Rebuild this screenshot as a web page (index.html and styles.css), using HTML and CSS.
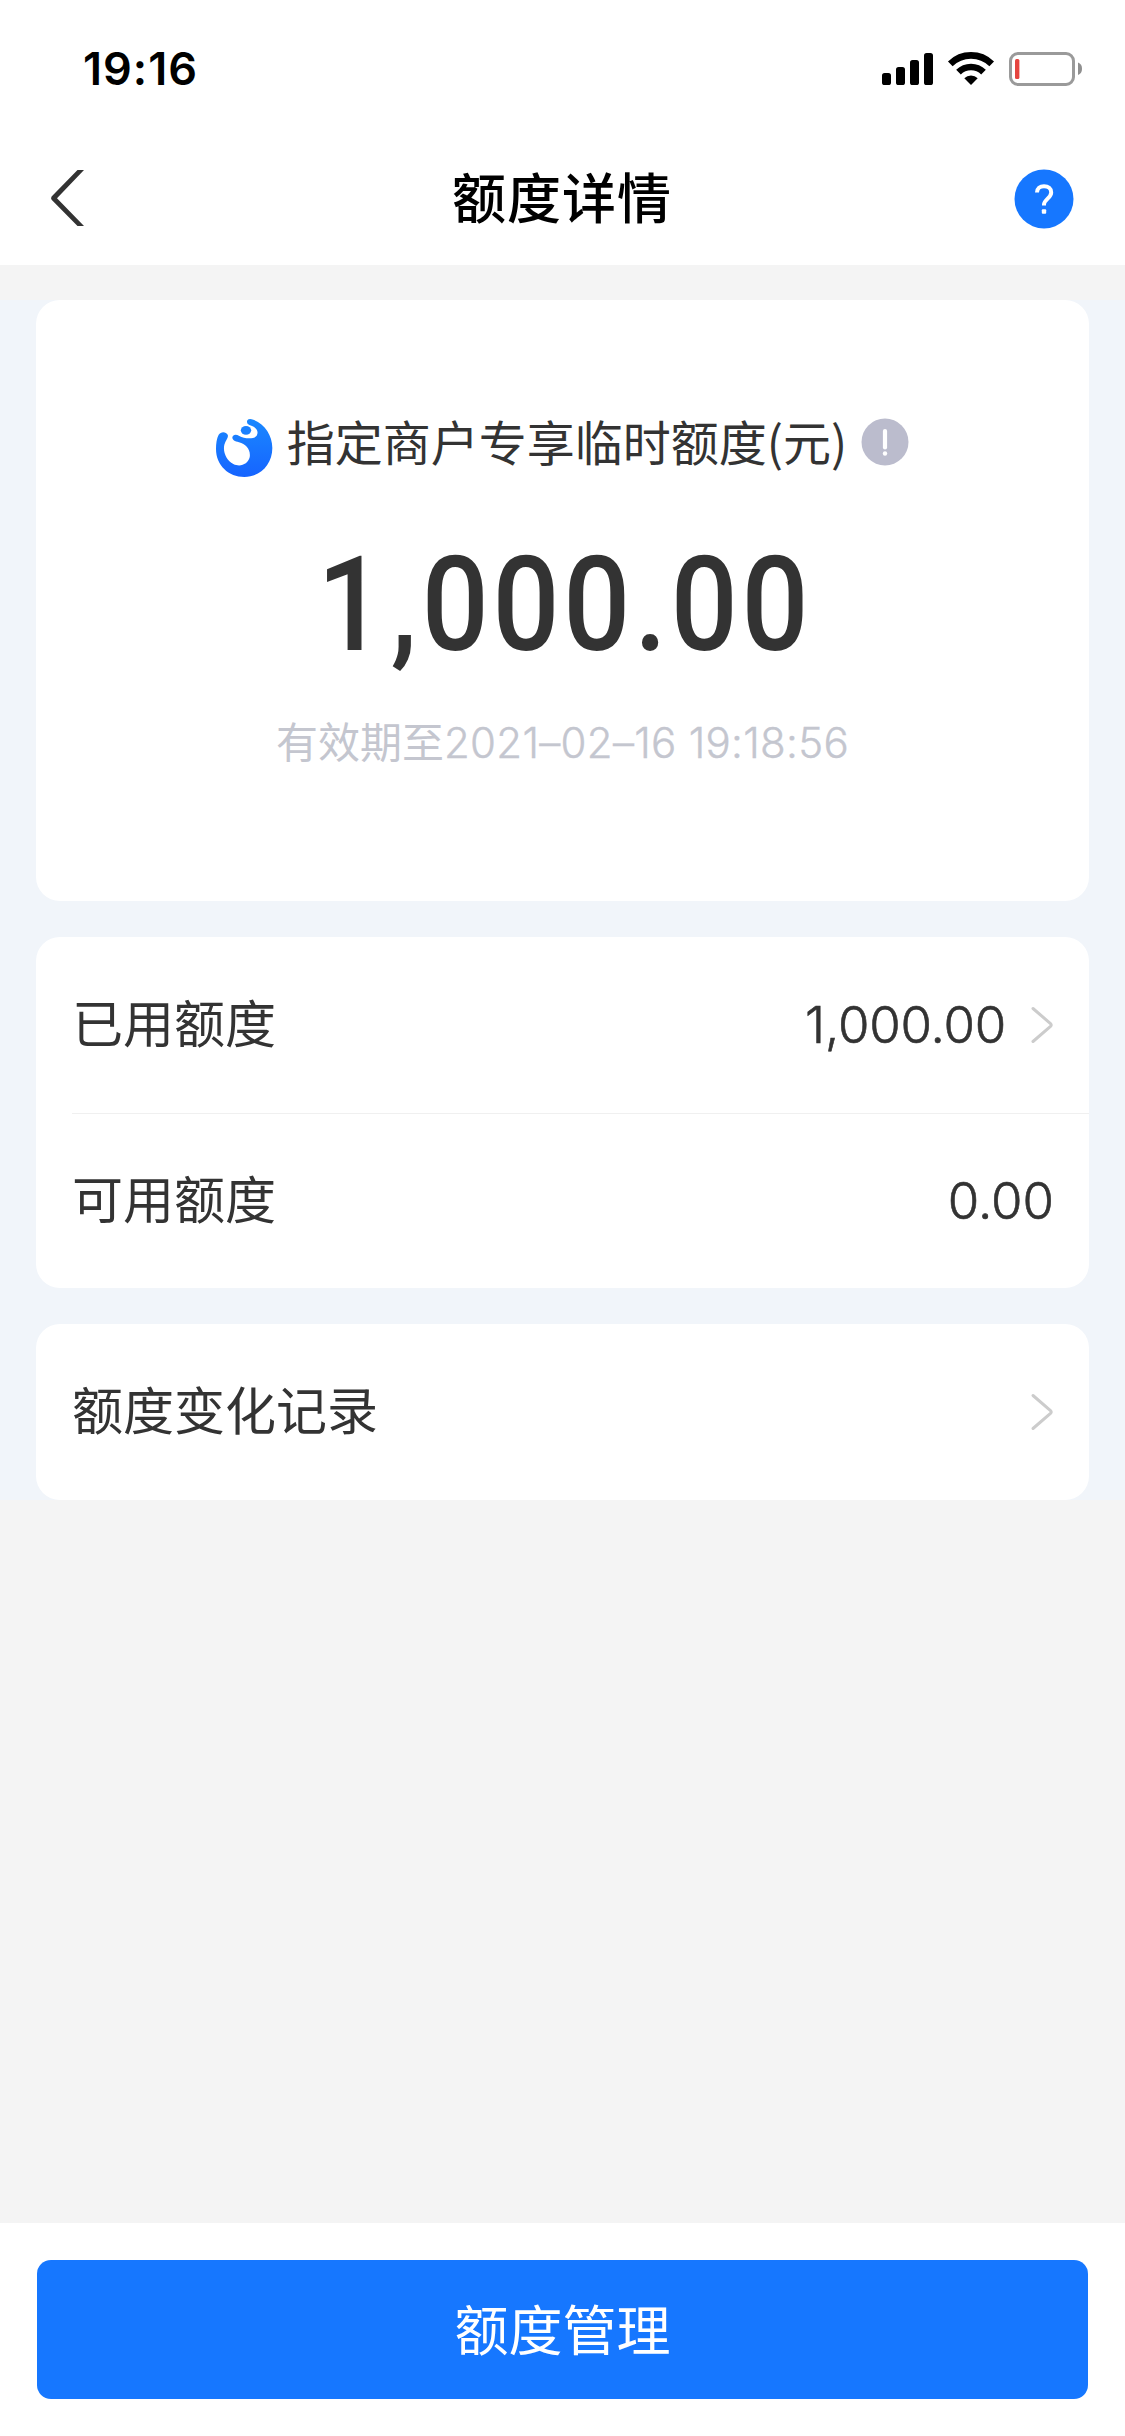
FILE: index.html
```html
<!DOCTYPE html>
<html lang="zh-CN">
<head>
<meta charset="utf-8">
<title>额度详情</title>
<link rel="stylesheet" href="styles.css">
</head>
<body>
<div class="screen">
  <div class="status">
    <span class="time">19:16</span>
    <svg class="indicators" width="204" height="40" viewBox="880 49 204 40">
      <rect x="882" y="73" width="9" height="12" rx="2.6"/>
      <rect x="896" y="67" width="9" height="18" rx="2.6"/>
      <rect x="910" y="60" width="9" height="25" rx="2.6"/>
      <rect x="924" y="53" width="9" height="32" rx="2.6"/>
      <g fill="none" stroke="#000" stroke-width="6.6">
        <path d="M950.3 63.9a29.5 29.5 0 0 1 41.4 0"/>
        <path d="M958.5 72.2a17.8 17.8 0 0 1 25 0"/>
      </g>
      <path d="M964.3 78.2a9.5 9.5 0 0 1 13.4 0L971 85z"/>
      <rect x="1010.5" y="53.500" width="63" height="31" rx="7.500" fill="none" stroke="#9a9a9a" stroke-width="3"/>
      <rect x="1015" y="59" width="4.400" height="20" rx="1.500" fill="#e5443f"/>
      <path d="M1078 62.500q4 1.500 4 6.200t-4 6.300z" fill="#8f8f8f"/>
    </svg>
  </div>
  <header class="nav">
    <svg class="back" width="36" height="60" viewBox="50 168 36 60"><path d="M77.500 170H84L57 198.200 84 226H77.500L51.600 199.800Q50.500 198.200 51.600 196.500z" fill="#333"/></svg>
    <h1 class="title">额度详情</h1>
    <svg class="help" width="60" height="60" viewBox="0 0 60 60">
      <circle cx="30" cy="30" r="29.500" fill="#1677ff"/>
      <path d="M23 23.500C23 19.400 26 17.200 30 17.200c4.200 0 7.200 2.400 7.200 6.200 0 5.600-7.200 7.200-7.200 12.100v1" fill="none" stroke="#fff" stroke-width="4"/>
      <rect x="27.800" y="40.300" width="4.400" height="4.400" rx="1" fill="#fff"/>
    </svg>
  </header>
  <main class="content">
    <section class="card summary">
      <div class="caption">
        <svg class="logo" width="58" height="60" viewBox="75 84 174 180">
          <defs><linearGradient id="blue" x1="0" y1="0" x2="0" y2="1"><stop offset="0" stop-color="#1a88ff"/><stop offset="1" stop-color="#1664ff"/></linearGradient></defs>
          <path fill="url(#blue)" d="M172 91Q177 84 190 89C224 102 247 136 247 174C247 224 210 261 163 261C116 261 78 226 78 177C78 160 80 145 86 134C92 124 108 124 113 134C117 143 107 151 103 164C98 187 110 211 130 222C151 233 174 222 179 202C183 180 168 162 147 157C134 154 127 150 127 142C129 133 138 132 148 138C162 146 191 149 200 137C208 123 197 110 178 105Q168 101 172 91Z"/>
          <ellipse cx="168" cy="121" rx="15.500" ry="13" fill="#1a80ff"/>
        </svg>
        <span class="caption-text">指定商户专享临时额度(元)</span>
        <svg class="info" width="48" height="48" viewBox="0 0 48 48">
          <circle cx="24" cy="24" r="23.500" fill="#bbbccd"/>
          <path d="M24 13v16.500" stroke="#fff" stroke-width="4.200" stroke-linecap="round"/>
          <circle cx="24" cy="35.500" r="2.200" fill="#fff"/>
        </svg>
      </div>
      <div class="amount"><span class="lead">1</span><span class="comma">,</span>000.00</div>
      <div class="expiry">有效期至<span class="stamp">2021–02–16 19:18:56</span></div>
    </section>
    <section class="card">
      <div class="row used">
        <span class="label">已用额度</span>
        <span class="value">1,000.00</span>
        <svg class="chevron" width="24" height="40" viewBox="0 0 24 40"><path d="M3 3.500 20.500 18.600q1.500 1.400 0 2.800L3 36.500"/></svg>
      </div>
      <div class="row divided">
        <span class="label">可用额度</span>
        <span class="value">0.00</span>
      </div>
    </section>
    <section class="card">
      <div class="row">
        <span class="label">额度变化记录</span>
        <svg class="chevron alone" width="24" height="40" viewBox="0 0 24 40"><path d="M3 3.500 20.500 18.600q1.500 1.400 0 2.800L3 36.500"/></svg>
      </div>
    </section>
  </main>
  <footer class="footer"><button class="primary">额度管理</button></footer>
</div>
</body>
</html>
```
FILE: styles.css
```css
* { box-sizing: border-box; }
body { margin: 0; }
.screen {
  display: flex;
  flex-direction: column;
  width: 1125px;
  height: 2436px;
  background: #f4f4f4;
  color: #333;
  font-family: Inter, "Noto Sans CJK SC", sans-serif;
}
.status {
  display: flex;
  justify-content: space-between;
  align-items: center;
  height: 132px;
  padding: 6px 41px 0 83px;
  background: #fff;
  color: #000;
}
.time { font-size: 45px; font-weight: 600; line-height: 60px; letter-spacing: 1px; }
.nav {
  display: flex;
  justify-content: space-between;
  align-items: center;
  height: 133px;
  padding: 0 51px 0 50px;
  background: #fff;
}
.back { margin: 0 24px 2px 0; }
.title {
  margin: 0;
  padding-bottom: 6px;
  color: #000;
  font: 500 54px/80px "Noto Sans CJK SC", sans-serif;
  letter-spacing: 1px;
}
.content {
  display: flex;
  flex-direction: column;
  gap: 36px;
  height: 1200px;
  margin-top: 35px;
  padding: 0 36px;
  background: #f1f5fa;
}
.card { border-radius: 24px; background: #fff; }
.summary {
  display: flex;
  flex-direction: column;
  align-items: center;
  height: 601px;
  padding-top: 107px;
}
.caption { display: flex; align-items: center; height: 72px; }
.logo { margin-top: 9px; }
.caption-text {
  margin: 0 14px 0 14px;
  padding-bottom: 6px;
  font: 400 48px/72px "Noto Sans CJK SC", sans-serif;
}
.info { margin: 0 1px 3px 0; }
.amount {
  height: 150px;
  margin-top: 51px;
  font: 500 131px/150px Roboto, sans-serif;
  transform: scaleX(.9);
  letter-spacing: 4.2px;
}
.lead { margin: 0 -5px 0 5px; }
.comma { margin: 0 1px 0 8px; }
.expiry {
  margin-top: 30px;
  color: #c4c6cf;
  font: 400 42px/60px "Noto Sans CJK SC", sans-serif;
}
.stamp {
  font-family: Inter, sans-serif;
  font-weight: 300;
  letter-spacing: .3px;
  -webkit-text-stroke: .4px currentColor;
}
.row {
  display: flex;
  align-items: center;
  height: 176px;
  margin-left: 36px;
  padding-right: 35px;
  font: 400 51px/76px "Noto Sans CJK SC", sans-serif;
}
.label { padding-bottom: 8px; }
.divided { height: 175px; border-top: 1px solid #f0f0f0; }
.value {
  margin-left: auto;
  font-family: Inter, sans-serif;
  font-weight: 300;
  -webkit-text-stroke: .6px currentColor;
}
.used .value { letter-spacing: -.2px; }
.chevron {
  margin-left: 24px;
  fill: none;
  stroke: #ccc;
  stroke-width: 3;
  stroke-linecap: round;
}
.alone { margin-left: auto; }
.footer {
  height: 213px;
  margin-top: auto;
  padding: 37px 37px 0;
  background: #fff;
}
.primary {
  display: block;
  width: 100%;
  height: 139px;
  padding: 0 0 4px;
  border: 0;
  border-radius: 14px;
  background: #1677ff;
  color: #fff;
  font: 400 54px/80px "Noto Sans CJK SC", sans-serif;
}
```
